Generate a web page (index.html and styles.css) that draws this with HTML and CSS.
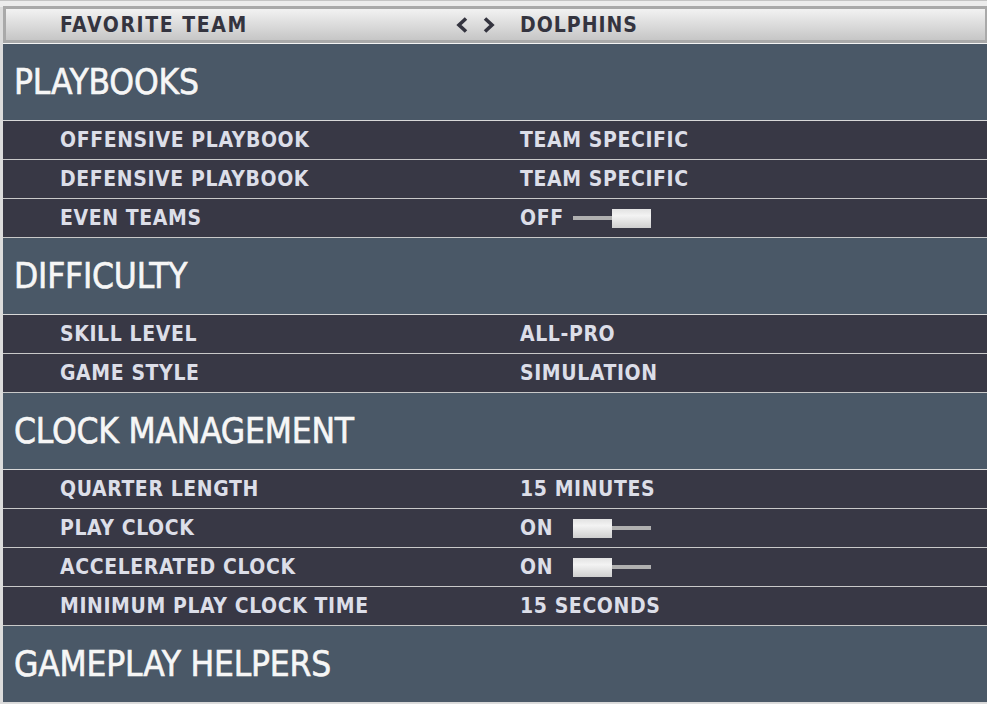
FILE: index.html
```html
<!DOCTYPE html>
<html lang="en">
<head>
    <meta charset="UTF-8">
    <meta name="viewport" content="width=device-width, initial-scale=1.0">
    <title>Game Options</title>
    <link rel="stylesheet" href="styles.css">
</head>
<body>
    <div class="settings">
        <div class="fav-row">
            <span class="label">FAVORITE TEAM</span>
            <span class="arrows">
                <svg width="14" height="18" viewBox="0 0 14 18"><path d="M11 2.5 L4 9 L11 15.5" fill="none" stroke="#34343f" stroke-width="3.6"/></svg>
                <svg width="14" height="18" viewBox="0 0 14 18"><path d="M3 2.5 L10 9 L3 15.5" fill="none" stroke="#34343f" stroke-width="3.6"/></svg>
            </span>
            <span class="value">DOLPHINS</span>
        </div>

        <div class="section">PLAYBOOKS</div>
        <div class="row"><span class="label">OFFENSIVE PLAYBOOK</span><span class="value">TEAM SPECIFIC</span></div>
        <div class="row"><span class="label">DEFENSIVE PLAYBOOK</span><span class="value">TEAM SPECIFIC</span></div>
        <div class="row">
            <span class="label">EVEN TEAMS</span>
            <span class="value"><span class="state">OFF</span><span class="toggle"><span class="track"></span><span class="knob"></span></span></span>
        </div>

        <div class="section">DIFFICULTY</div>
        <div class="row"><span class="label">SKILL LEVEL</span><span class="value">ALL-PRO</span></div>
        <div class="row"><span class="label">GAME STYLE</span><span class="value">SIMULATION</span></div>

        <div class="section">CLOCK MANAGEMENT</div>
        <div class="row"><span class="label">QUARTER LENGTH</span><span class="value">15 MINUTES</span></div>
        <div class="row">
            <span class="label">PLAY CLOCK</span>
            <span class="value"><span class="state">ON</span><span class="toggle"><span class="knob"></span><span class="track"></span></span></span>
        </div>
        <div class="row">
            <span class="label">ACCELERATED CLOCK</span>
            <span class="value"><span class="state">ON</span><span class="toggle"><span class="knob"></span><span class="track"></span></span></span>
        </div>
        <div class="row"><span class="label">MINIMUM PLAY CLOCK TIME</span><span class="value">15 SECONDS</span></div>

        <div class="section">GAMEPLAY HELPERS</div>
    </div>
</body>
</html>
```

FILE: styles.css
```css
html, body {
    margin: 0;
    padding: 0;
    height: 100%;
    overflow: hidden;
}
body {
    background-color: #dcdcdc;
    font-family: "DejaVu Sans Condensed", "DejaVu Sans", sans-serif;
}
.settings {
    padding-left: 3px;
    border-top: 1px solid #c4c4c4;
    padding-top: 5px;
    background: linear-gradient(#ececec 0, #ececec 6px, #dcdcdc 6px);
}
.fav-row {
    display: flex;
    align-items: center;
    height: 31px;
    border: 3px solid #a9a9a9;
    border-right-width: 2px;
    background: linear-gradient(#f2f2f2, #c6c6c6);
    color: #34343f;
    font-weight: bold;
    font-size: 21px;
    letter-spacing: 1.6px;
    box-shadow: 0 1px 0 #f4f4f4;
    margin-bottom: 1px;
}
.fav-row .label {
    padding-left: 54px;
    width: 395px;
}
.arrows {
    display: flex;
    gap: 13px;
    width: 65px;
}
.fav-row .value {
    letter-spacing: 1px;
}
.section {
    height: 76px;
    border-bottom: 1px solid #d8d8d8;
    background-color: #4a5867;
    color: #f6f6f6;
    font-size: 35px;
    font-weight: normal;
    letter-spacing: -0.2px;
    -webkit-text-stroke: 0.6px #f6f6f6;
    display: flex;
    align-items: center;
    padding-left: 11px;
}
.row {
    display: flex;
    align-items: center;
    height: 38px;
    border-bottom: 1px solid #c9c9c9;
    background-color: #383845;
    color: #dcdee8;
    font-size: 21px;
    font-weight: bold;
    letter-spacing: 0.6px;
}
.row .label {
    padding-left: 57px;
    width: 460px;
}
.value {
    display: flex;
    align-items: center;
}
.state {
    width: 53px;
}
.toggle {
    display: flex;
    align-items: center;
}
.track {
    width: 39px;
    height: 4px;
    background-color: #b0b0b0;
}
.knob {
    width: 39px;
    height: 19px;
    background: linear-gradient(#e2e2e2, #f3f3f3 35%, #cfcfcf);
}
```
